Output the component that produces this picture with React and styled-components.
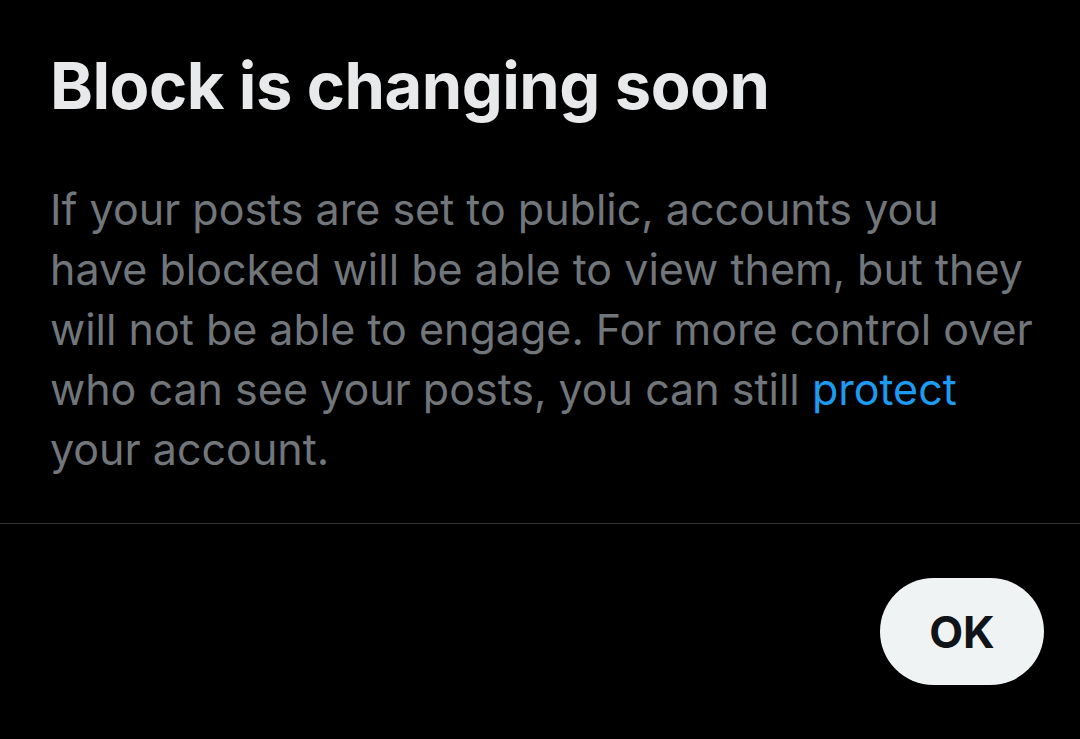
import React from 'react'
import styled, { createGlobalStyle } from 'styled-components'

const GlobalStyle = createGlobalStyle`
  html, body {
    margin: 0;
    background: #000;
  }
  body {
    font-family: Inter, "Noto Sans", sans-serif;
  }
`

export default function App() {
  return (
    <>
      <GlobalStyle />
      <Dialog>
        <Content>
          <Title>Block is changing soon</Title>
          <Body>
            If your posts are set to public, accounts you<br />
            have blocked will be able to view them, but they<br />
            will not be able to engage. For more control over<br />
            who can see your posts, you can still <Link>protect</Link><br />
            your account.
          </Body>
        </Content>
        <Footer>
          <OkButton>OK</OkButton>
        </Footer>
      </Dialog>
    </>
  )
}

const Dialog = styled.div`
  width: 1080px;
  height: 739px;
  background: #000;
  display: flex;
  flex-direction: column;
`

const Content = styled.div`
  padding: 48px 50px 44px;
  border-bottom: 1px solid #2f3336;
`

const Title = styled.h1`
  margin: 0 0 55px;
  font-size: 65px;
  line-height: 76px;
  font-weight: 700;
  color: #e7e9ea;
  letter-spacing: -0.5px;
`

const Body = styled.p`
  margin: 0;
  font-size: 43px;
  line-height: 60px;
  font-weight: 400;
  color: #71767b;
  white-space: nowrap;
`

const Link = styled.span`
  color: #1d9bf0;
`

const Footer = styled.div`
  display: flex;
  justify-content: flex-end;
  padding: 54px 36px 0;
`

const OkButton = styled.button`
  width: 164px;
  height: 107px;
  border: none;
  border-radius: 54px;
  background: #eff3f4;
  color: #0f1419;
  font-family: Inter, "Noto Sans", sans-serif;
  font-size: 44px;
  font-weight: 700;
  cursor: pointer;
`
